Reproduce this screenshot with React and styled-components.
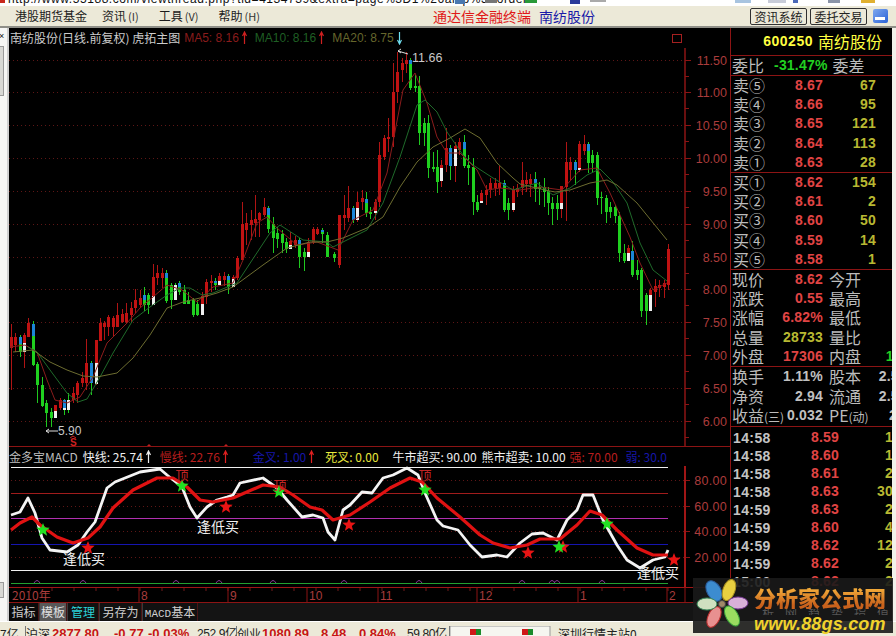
import React from "react";
import styled, { createGlobalStyle } from "styled-components";

const Global = createGlobalStyle`
  html, body { margin: 0; padding: 0; background: #ece9d8; }
  body { font-family: "Noto Sans CJK SC", "Liberation Sans", sans-serif; }
  * { box-sizing: border-box; }
`;

const CJK = `"Noto Sans CJK SC", "Liberation Sans", sans-serif`;
const LATIN = `"Liberation Sans", "Noto Sans CJK SC", sans-serif`;
const FRAME = "#8c1414";

const Page = styled.div`
  position: relative;
  width: 896px;
  height: 636px;
  overflow: hidden;
  background: #ece9d8;
  display: flex;
  flex-direction: column;
`;

/* ---------- browser strip ---------- */
const TopStrip = styled.div`
  position: relative;
  height: 6px;
  background: #ffffff;
  overflow: hidden;
  flex: none;
`;
const Url = styled.div`
  margin: -8px 0 0 8px;
  font: 12px/14px ${LATIN};
  letter-spacing: 0.55px;
  color: #111;
  white-space: nowrap;
`;
const StripIcons = styled.svg`
  position: absolute;
  inset: 0;
  width: 896px;
  height: 6px;
`;

/* ---------- menu ---------- */
const MenuBar = styled.div`
  height: 22px;
  flex: none;
  display: flex;
  align-items: center;
  background: #ece9d8;
  border-bottom: 2px solid #8f8f88;
  padding-left: 15px;
  font: 12px/16px ${CJK};
  color: #1c1c1c;
`;
const MenuItem = styled.span`
  margin-left: ${(p) => p.$ml || 0}px;
  white-space: nowrap;
`;
const MenuKey = styled.span`
  font-size: 11px;
  margin-left: 2px;
  color: #333;
`;
const BrandTitle = styled.span`
  margin-left: ${(p) => p.$ml || 0}px;
  font-size: 14px;
  color: ${(p) => p.$color};
  white-space: nowrap;
`;
const SysButton = styled.button`
  width: 57px;
  height: 17px;
  margin-left: ${(p) => p.$ml || 0}px;
  padding: 0;
  background: #ece9d8;
  border: 1px solid #303030;
  border-radius: 2px;
  font: 12px/15px ${CJK};
  color: #222;
`;
const MinimizeIcon = styled.div`
  width: 15px;
  height: 14px;
  margin-left: 6px;
  border-radius: 2px;
  background: linear-gradient(135deg, #7fa8ee, #2a62d8);
  display: flex;
  align-items: flex-end;
  justify-content: center;
  padding-bottom: 3px;
  &::after {
    content: "";
    width: 10px;
    height: 3px;
    background: #fff;
  }
`;

/* ---------- body ---------- */
const Body = styled.div`
  display: flex;
  height: 593px;
  flex: none;
`;
const Rail = styled.div`
  width: 9px;
  flex: none;
  background: #f6f6f4;
  border-right: 2px solid #cfcfcf;
  display: flex;
  flex-direction: column;
  align-items: flex-start;
  font: 9px/10px ${LATIN};
  color: #111;
`;
const RailMark = styled.span`
  height: 14px;
  padding-top: 3px;
  margin-left: -1px;
`;
const RailTab = styled.div`
  width: 4px;
  height: ${(p) => p.$h}px;
  margin-top: ${(p) => p.$mt || 0}px;
  background: #d8d8d4;
  border: 1px solid #9a9a9a;
  border-left: 0;
`;
const Center = styled.div`
  width: 721px;
  flex: none;
  background: #000;
  display: flex;
  flex-direction: column;
`;
const ChartHead = styled.div`
  height: ${(p) => p.$h}px;
  flex: none;
  display: flex;
  align-items: center;
  font: 12px/16px ${LATIN};
  white-space: nowrap;
  overflow: hidden;
  border-top: ${(p) => (p.$rule ? `1px solid ${FRAME}` : "0")};
`;
const HeadText = styled.span`
  color: ${(p) => p.$color};
  margin-left: ${(p) => p.$ml || 0}px;
  font-family: ${(p) => (p.$latin ? LATIN : CJK)};
  flex: none;
  display: inline-flex;
  align-items: center;
`;
const RestoreBox = styled.span`
  width: 10px;
  height: 9px;
  border: 1px solid #a52020;
  margin-left: auto;
  margin-right: 48px;
  flex: none;
`;
const PlotSvg = styled.svg`
  display: block;
  flex: none;
  font-family: ${LATIN};
`;
const Tabs = styled.div`
  flex: 1;
  display: flex;
  align-items: stretch;
  background: #141414;
  font: 12px/17px ${CJK};
`;
const Tab = styled.div`
  width: ${(p) => p.$w}px;
  flex: none;
  text-align: center;
  border-right: 1px solid #4a1414;
  border-left: ${(p) => (p.$first ? "0" : "1px solid #3a3a3a")};
  background: ${(p) => (p.$selected ? "#585858" : p.$first ? "#0a0a0a" : "#111")};
  color: ${(p) => (p.$accent ? "#2bd3d8" : p.$selected ? "#e0e0e0" : "#cfcfcf")};
  white-space: nowrap;
`;
const TabMono = styled.span`
  font-family: "Liberation Mono", monospace;
  font-size: 11px;
`;

/* ---------- right panel ---------- */
const Quote = styled.div`
  width: 162px;
  flex: none;
  background: #000;
  border-left: 1px solid ${FRAME};
  display: flex;
  flex-direction: column;
  overflow: hidden;
  color: #bcbcbc;
  font: 16px/19px ${CJK};
`;
const EdgeGap = styled.div`
  flex: 1;
  background: #f2f1ea;
`;
const Section = styled.div`
  height: ${(p) => p.$h}px;
  flex: none;
  display: grid;
  grid-auto-rows: 1fr;
  align-items: center;
  border-bottom: 1px solid ${FRAME};
`;
const StockHead = styled.div`
  padding-right: 10px;
  display: flex;
  justify-content: flex-end;
  align-items: center;
  gap: 5px;
  color: #ffff40;
`;
const StockCode = styled.span`
  font: bold 14px/19px ${LATIN};
  letter-spacing: 0.5px;
`;
const Num = styled.span`
  font: bold 14px/19px ${LATIN};
  letter-spacing: 0.2px;
  color: ${(p) => p.$color};
  white-space: nowrap;
`;
const RatioNum = styled(Num)`
  margin: 0 5px 0 10px;
`;
const BookRow = styled.div`
  width: 145px;
  padding-left: 2px;
  display: grid;
  grid-template-columns: 32px 58px 53px;
  white-space: nowrap;
  & > span:nth-child(n + 2) {
    text-align: right;
  }
`;
const RatioRow = styled.div`
  padding-left: 1px;
  display: flex;
  align-items: center;
  white-space: nowrap;
`;
const QuoteRow = styled.div`
  padding-left: 1px;
  display: flex;
  white-space: nowrap;
`;
const Cell = styled.div`
  width: ${(p) => p.$w}px;
  flex: none;
  margin-left: ${(p) => p.$ml || 0}px;
  display: flex;
  justify-content: space-between;
`;
const SmallParen = styled.span`
  font-size: 12px;
`;
const Ticks = styled.div`
  flex: 1;
  padding-top: 1px;
  display: grid;
  grid-auto-rows: 18px;
  align-content: start;
`;
const TickRow = styled.div`
  width: 166px;
  padding-left: 2px;
  display: grid;
  grid-template-columns: 36px 70px 54px;
  align-items: center;
  white-space: nowrap;
  & > span:nth-child(n + 2) {
    text-align: right;
  }
`;
const TickTime = styled.span`
  font: bold 14px/18px ${LATIN};
  letter-spacing: 0.4px;
  color: #c4c4c4;
`;

/* ---------- status ---------- */
const Status = styled.div`
  flex: 1;
  display: flex;
  padding-top: 4px;
  border-top: 1px solid #fff;
  background: #ece9d8;
  font: 12px/16px ${CJK};
  color: #222;
  white-space: nowrap;
  overflow: hidden;
`;
const StatusCell = styled.span`
  width: ${(p) => p.$w}px;
  flex: none;
  color: ${(p) => p.$color || "#222"};
  font-weight: ${(p) => (p.$bold ? 700 : 400)};
  font-family: ${(p) => (p.$bold || p.$tight ? LATIN : CJK)};
  font-size: ${(p) => (p.$bold ? 13 : 12)}px;
  letter-spacing: ${(p) => (p.$tight ? "-0.4px" : "0")};
  border-right: ${(p) => (p.$rule ? "1px solid #777" : "0")};
`;
const MiniBars = styled.svg`
  width: 108px;
  height: 14px;
  flex: none;
`;

/* ---------- watermark ---------- */
const Watermark = styled.div`
  position: absolute;
  left: 693px;
  top: 578px;
  width: 200px;
  height: 55px;
  padding-left: 61px;
  background: rgba(26, 26, 26, 0.9);
  display: flex;
  flex-direction: column;
`;
const Flower = styled.svg`
  position: absolute;
  left: 2px;
  top: 1px;
  width: 54px;
  height: 50px;
`;
const MarkTitle = styled.div`
  font: 900 22px/30px ${CJK};
  color: #e0902a;
  white-space: nowrap;
  background: linear-gradient(180deg, #f7b23c 20%, #c8611c 85%);
  -webkit-background-clip: text;
  background-clip: text;
  -webkit-text-fill-color: transparent;
  margin-top: 4px;
  height: 27px;
`;
const MarkFaint = styled.div`
  font: 12px/8px ${CJK};
  height: 6px;
  letter-spacing: 11px;
  padding-left: 8px;
  color: #565656;
  white-space: nowrap;
  overflow: hidden;
`;
const MarkUrl = styled.div`
  font: italic 700 18px/18px ${LATIN};
  color: #f0d22c;
  letter-spacing: 0.2px;
  white-space: nowrap;
`;

/* ---------- data ---------- */
const candles = [
  [11,324,390,337,348,"r"],[15,333,352,337,345,"r"],[20,335,357,337,352,"bg",344],[24,333,368,335,352,"rw",343],
  [28,318,337,323,337,"r"],[33,321,366,324,365,"bg",336],[37,362,403,364,385,"g"],[42,377,407,385,406,"g"],
  [46,400,427,403,413,"g"],[51,408,427,412,418,"g"],[55,405,418,405,418,"rw",411],[60,398,410,400,408,"r"],
  [64,399,415,400,410,"bw",408],[68,393,413,400,410,"w"],[73,387,403,393,400,"r"],[77,381,403,383,395,"r"],
  [82,372,387,378,383,"r"],[86,339,390,363,383,"r"],[91,361,395,363,383,"b"],[96,340,385,340,384,"rw",363],
  [100,318,341,323,341,"r"],[104,321,340,323,327,"r"],[108,315,336,317,327,"r"],[113,316,337,318,327,"r"],
  [117,303,327,315,327,"r"],[122,309,323,314,322,"r"],[126,303,323,313,322,"r"],[131,302,323,308,315,"r"],
  [135,289,313,300,308,"r"],[140,290,308,298,305,"r"],[144,287,311,295,305,"bg",300],[148,293,314,295,305,"g"],
  [153,264,305,277,305,"rw",296],[157,265,285,273,278,"r"],[162,268,288,273,278,"r"],[166,270,303,273,301,"bg",278],
  [171,283,309,285,300,"g"],[175,283,300,285,300,"w"],[179,281,295,283,292,"bg",287],[184,285,304,290,304,"g"],
  [188,292,304,300,304,"g"],[193,298,317,300,315,"g"],[197,300,316,304,315,"g"],[202,292,315,296,315,"rw",304],
  [206,279,304,282,297,"r"],[211,275,292,281,283,"r"],[215,278,290,281,285,"bg",283],[219,273,285,276,285,"rw",281],
  [224,272,286,276,280,"r"],[228,274,294,276,287,"bg",280],[233,275,287,277,287,"rw",279],[237,256,280,258,278,"r"],
  [242,202,260,224,260,"r"],[246,213,245,223,230,"r"],[251,210,240,220,225,"r"],[255,195,237,219,223,"r"],
  [259,212,237,213,220,"r"],[264,198,217,207,215,"r"],[268,206,233,208,229,"bg",215],[273,217,253,224,238,"g"],
  [277,227,248,233,239,"g"],[282,230,253,234,243,"g"],[286,238,253,242,249,"g"],[290,232,249,241,249,"rw",245],
  [295,236,248,240,245,"r"],[299,238,268,240,257,"bg",244],[304,248,271,252,257,"g"],[308,238,257,242,257,"rw",252],
  [313,227,244,229,242,"r"],[317,227,235,229,234,"r"],[322,228,243,230,234,"bg",232],[327,232,257,235,257,"g"],
  [334,252,262,254,258,"g"],[339,215,268,215,265,"r"],[344,195,230,215,218,"r"],[348,186,222,208,218,"r"],
  [353,206,223,208,220,"b"],[357,192,222,202,220,"rw",208],[362,190,210,198,202,"r"],[366,192,217,199,213,"bg",203],
  [370,207,219,212,214,"g"],[375,199,220,202,213,"rw",211],[379,142,207,155,202,"r"],[384,135,160,138,157,"r"],
  [388,118,152,137,139,"r"],[393,63,147,92,137,"r"],[397,52,103,72,92,"r"],[402,58,82,63,70,"r"],
  [406,52,73,60,64,"r"],[410,58,90,60,88,"bg",64],[415,75,92,86,88,"g"],[419,76,145,86,133,"g"],
  [424,118,146,123,133,"g"],[428,115,178,123,168,"g"],[433,152,172,167,169,"g"],[437,150,193,167,182,"g"],
  [441,160,187,165,181,"rw",168],[446,128,172,148,165,"r"],[450,145,180,148,166,"b"],[455,142,182,146,166,"rw",149],
  [459,138,155,142,150,"r"],[464,135,168,142,166,"bg",149],[468,155,185,165,168,"g"],[473,158,215,167,202,"g"],
  [477,195,212,202,210,"g"],[481,190,203,193,203,"rw",201],[486,185,205,190,195,"r"],[490,178,198,183,190,"r"],
  [495,178,196,183,188,"r"],[499,166,195,183,188,"r"],[504,180,212,183,210,"bg",186],[508,198,220,203,210,"g"],
  [513,186,212,190,210,"rw",203],[517,184,197,188,192,"r"],[522,162,195,180,188,"r"],[526,172,192,180,184,"r"],
  [530,174,197,179,184,"r"],[535,172,202,179,189,"bg",183],[539,182,205,187,189,"g"],[544,178,207,187,192,"g"],
  [548,187,215,191,203,"g"],[552,197,225,203,209,"g"],[557,195,220,203,209,"g"],[561,186,218,186,209,"rw",203],
  [566,142,221,162,187,"r"],[570,157,180,162,170,"r"],[575,160,185,162,170,"b"],[579,141,172,144,170,"rw",168],
  [584,135,155,144,151,"r"],[588,142,173,144,163,"bg",151],[592,150,172,155,163,"g"],[597,152,205,155,198,"g"],
  [601,192,214,197,198,"g"],[606,195,223,198,212,"g"],[610,202,218,207,212,"g"],[615,205,223,207,216,"g"],
  [619,212,262,216,253,"g"],[624,244,263,253,261,"g"],[628,245,261,248,261,"rw",253],[632,241,277,251,275,"bg",260],
  [637,260,280,270,275,"g"],[641,268,317,270,311,"g"],[646,293,325,295,311,"g"],[650,288,311,290,311,"rw",295],
  [655,279,307,286,292,"r"],[659,280,297,285,288,"r"],[664,280,298,283,287,"r"],[668,244,290,249,285,"r"],
];

const ma5 = [[10,347],[25,345],[37,352],[47,380],[55,400],[67,403],[80,397],[93,377],[107,343],[127,323],[140,308],[153,297],[167,285],[182,290],[197,302],[213,287],[233,283],[243,260],[257,223],[267,217],[277,228],[297,245],[317,242],[338,250],[353,220],[373,210],[387,173],[403,90],[415,73],[427,103],[437,137],[447,153],[460,153],[477,170],[487,190],[500,188],[520,190],[540,187],[562,190],[580,170],[597,168],[610,193],[630,237],[640,263],[653,290],[667,283]];
const ma10 = [[28,347],[37,352],[50,370],[67,393],[78,402],[87,399],[100,377],[113,353],[133,320],[150,307],[167,295],[180,288],[190,288],[202,295],[213,293],[237,283],[270,233],[280,225],[303,240],[327,242],[333,247],[367,230],[383,203],[400,157],[417,105],[425,100],[437,112],[447,132],[463,155],[473,165],[493,178],[513,190],[537,183],[553,195],[570,188],[587,175],[600,169],[613,182],[627,203],[640,243],[653,270],[667,281]];
const ma20 = [[13,352],[33,350],[50,362],[67,370],[83,376],[97,377],[117,373],[133,358],[150,335],[167,308],[183,302],[200,298],[217,293],[233,287],[263,265],[287,248],[310,242],[327,242],[343,238],[367,228],[383,217],[400,187],[417,162],[433,147],[450,138],[465,129],[480,138],[497,163],[513,178],[520,184],[545,190],[555,192],[570,190],[590,183],[607,180],[617,185],[637,203],[667,240]];

const fast = [[11,515],[20,512],[28,498],[35,513],[42,538],[50,550],[67,552],[78,545],[87,532],[95,522],[107,488],[115,482],[140,472],[160,469],[167,475],[182,487],[190,507],[197,518],[207,507],[217,500],[227,497],[233,495],[240,483],[263,478],[277,488],[287,500],[302,517],[313,515],[323,518],[328,532],[335,540],[343,510],[350,505],[362,492],[372,493],[383,478],[393,475],[407,468],[418,475],[425,493],[437,520],[443,526],[458,530],[470,545],[482,557],[497,555],[507,557],[520,543],[532,534],[543,533],[557,540],[567,520],[577,510],[583,495],[593,495],[603,520],[617,545],[627,560],[640,568],[653,560],[665,557],[668,550]];
const slow = [[11,530],[20,523],[32,517],[40,525],[57,537],[73,543],[88,538],[100,527],[113,508],[133,490],[157,478],[173,478],[187,487],[200,500],[213,502],[233,498],[263,485],[280,487],[293,495],[310,507],[322,510],[333,520],[350,515],[370,502],[390,488],[410,478],[422,482],[437,498],[460,517],[480,535],[493,543],[510,548],[527,545],[540,539],[560,539],[577,525],[590,511],[602,515],[617,530],[637,548],[653,555],[668,555]];

const greenStars = [[43,530],[182,486],[279,492],[425,490],[559,547],[607,524]];
const redStars = [[88,548],[226,507],[349,525],[528,553],[563,547],[674,560]];
const bumps = [37,83,176,219,273,344,419,522,552,557,602];
const priceLabels = [["11.50",60.5],["11.00",92.5],["10.50",125.5],["10.00",158.5],["9.50",191.5],["9.00",224.5],["8.50",257.5],["8.00",289.5],["7.50",322.5],["7.00",355.5],["6.50",388.5],["6.00",421.5]];
const dateMarks = [[139,"8"],[228,"9"],[307,"10"],[378,"11"],[477,"12"],[578,"1"],[667,"2"]];

const pts = (a) => a.map((p) => p.join(",")).join(" ");
const BAR = { r: "#c01212", g: "#1fd01f", b: "#1c86d8", w: "#f0f0f0" };

function Candle({ c }) {
  const [x, hi, lo, top, bot, t, split] = c;
  const wick = t === "r" || t === "rw" ? "#b01414" : "#1fc81f";
  const parts =
    t.length === 1
      ? [[top, bot, BAR[t]]]
      : [
          [top, split, BAR[t[0]]],
          [split, bot, BAR[t[1]]],
        ];
  return (
    <g shapeRendering="crispEdges">
      <line x1={x + 0.5} x2={x + 0.5} y1={hi} y2={lo} stroke={wick} />
      {parts.map(([a, b, col], i) => (
        <rect key={i} x={x - 1} y={a} width={3} height={Math.max(b - a, 1)} fill={col} />
      ))}
    </g>
  );
}

function Star({ x, y, color }) {
  const p = [];
  for (let i = 0; i < 10; i++) {
    const r = i % 2 ? 3 : 7;
    const a = (-90 + i * 36) * (Math.PI / 180);
    p.push([x + r * Math.cos(a), y + r * Math.sin(a)]);
  }
  return <polygon points={pts(p)} fill={color} />;
}

const ArrowSvg = styled.svg`
  margin-left: 3px;
  flex: none;
`;
const Arrow = ({ color, down }) => (
  <ArrowSvg width="5" height="14" viewBox="0 0 5 14">
    <path d={down ? "M2.5 1V13M0.5 9L2.5 13L4.5 9" : "M2.5 13V1M0.5 5L2.5 1L4.5 5"} stroke={color} fill="none" strokeWidth="1.2" />
  </ArrowSvg>
);

function PriceChart() {
  return (
    <PlotSvg width="721" height="398" viewBox="9 48 721 398">
      {priceLabels.map(([l, y]) => (
        <g key={l}>
          <line x1="9" x2="685" y1={y} y2={y} stroke="#5e1616" strokeDasharray="1 3" />
          <line x1="685" x2="691" y1={y} y2={y} stroke="#8c1414" />
          <line x1="685" x2="689" y1={y + 16} y2={y + 16} stroke="#8c1414" />
          <text x="727" y={y + 4.5} textAnchor="end" fontSize="12.5" fill="#ab3c3c">{l}</text>
        </g>
      ))}
      <line x1="685" x2="685" y1="48" y2="446" stroke="#8c1414" strokeWidth="1.5" />
      {candles.map((c) => <Candle key={c[0]} c={c} />)}
      <polyline points={pts(ma5)} fill="none" stroke="#8a1c1c" strokeWidth="1" />
      <polyline points={pts(ma10)} fill="none" stroke="#1f6a2a" strokeWidth="1" />
      <polyline points={pts(ma20)} fill="none" stroke="#6d6d30" strokeWidth="1" />
      <path d="M408 54L398 51M398 51l3 -2M398 51l3 2" stroke="#ddd" fill="none" />
      <text x="412" y="62" fontSize="12.5" fill="#c8c8c8">11.66</text>
      <path d="M46 431H58M46 431l3 -2M46 431l3 2" stroke="#ddd" fill="none" />
      <text x="58" y="435" fontSize="12" fill="#c8c8c8">5.90</text>
      <text x="70" y="445.5" fontSize="10" fontWeight="700" fill="#d02020">S</text>
      <path d="M70 438l3 -2l3 2" stroke="#d02020" fill="none" />
      <path d="M147 446l2 -2l2 2zM224 446l2 -2l2 2z" fill="#c02020" />
    </PlotSvg>
  );
}

function IndicatorChart() {
  const axis = [["80.00", 480.5], ["60.00", 506.5], ["40.00", 531.5], ["20.00", 557.5]];
  const rules = [[467.5, "#f0f0f0"], [493.5, "#a01c1c"], [518.5, "#b030b0"], [544.5, "#1515b0"], [570.5, "#f0f0f0"], [583.5, "#22a030"]];
  return (
    <PlotSvg width="721" height="121" viewBox="9 466 721 121">
      {axis.map(([l, y]) => (
        <g key={l}>
          <line x1="11" x2="685" y1={y} y2={y} stroke="#5e1616" strokeDasharray="1 3" />
          <line x1="685" x2="690" y1={y} y2={y} stroke="#8c1414" />
          <text x="727" y={y + 4.5} textAnchor="end" fontSize="12.5" letterSpacing="0.3" fill="#ab3c3c">{l}</text>
        </g>
      ))}
      {rules.map(([y, col]) => (
        <line key={y} x1="11" x2="668" y1={y} y2={y} stroke={col} strokeWidth="1" />
      ))}
      {bumps.map((x) => (
        <path key={x} d={`M${x - 3} 583Q${x} 578 ${x + 3} 583`} stroke="#8a3a9a" fill="none" />
      ))}
      <line x1="685" x2="685" y1="466" y2="587" stroke="#a01616" strokeWidth="2" />
      <polyline points={pts(fast)} fill="none" stroke="#f4f4f4" strokeWidth="2.8" strokeLinejoin="round" />
      <polyline points={pts(slow)} fill="none" stroke="#e01212" strokeWidth="3.2" strokeLinejoin="round" />
      {redStars.map(([x, y]) => <Star key={x} x={x} y={y} color="#e81414" />)}
      {greenStars.map(([x, y]) => <Star key={x} x={x} y={y} color="#22e022" />)}
      <text x="182" y="480" fontSize="13" textAnchor="middle" fontFamily={CJK} fill="#c02424">顶</text>
      <text x="280" y="490" fontSize="13" textAnchor="middle" fontFamily={CJK} fill="#c02424">顶</text>
      <text x="425" y="480" fontSize="13" textAnchor="middle" fontFamily={CJK} fill="#c02424">顶</text>
      <text x="63" y="564" fontSize="14" fontFamily={CJK} fill="#f0f0f0">逢低买</text>
      <text x="197" y="532" fontSize="14" fontFamily={CJK} fill="#f0f0f0">逢低买</text>
      <text x="637" y="578" fontSize="14" fontFamily={CJK} fill="#f0f0f0">逢低买</text>
    </PlotSvg>
  );
}

function DateAxis() {
  const minor = [];
  for (let x = 30; x < 670; x += 22) minor.push(x);
  return (
    <PlotSvg width="721" height="16" viewBox="9 587 721 16">
      <line x1="9" x2="730" y1="587.5" y2="587.5" stroke="#a01616" />
      <line x1="9" x2="730" y1="602.5" y2="602.5" stroke="#8c1414" />
      <line x1="685" x2="685" y1="587" y2="603" stroke="#8c1414" />
      {minor.map((x) => <line key={x} x1={x} x2={x} y1="588" y2="591" stroke="#6e1a1a" />)}
      <text x="12" y="600" fontSize="12" fontFamily={CJK} fill="#a83c3c">2010年</text>
      {dateMarks.map(([x, l]) => (
        <g key={l}>
          <line x1={x} x2={x} y1="588" y2="602" stroke="#8c1414" />
          <text x={x + 2} y="600" fontSize="12" fill="#a83c3c">{l}</text>
        </g>
      ))}
    </PlotSvg>
  );
}

const sells = [["卖⑤","8.67","67"],["卖④","8.66","95"],["卖③","8.65","121"],["卖②","8.64","113"],["卖①","8.63","28"]];
const buys = [["买①","8.62","154"],["买②","8.61","2"],["买③","8.60","50"],["买④","8.59","14"],["买⑤","8.58","1"]];
const RED = "#e04444";
const YEL = "#b8b832";
const GRY = "#c0c0c0";
const quotes = [
  ["现价","8.62",RED,"今开","8.07",RED],
  ["涨跌","0.55",RED,"最高","8.70",RED],
  ["涨幅","6.82%",RED,"最低","7.98",RED],
  ["总量","28733",YEL,"量比","1.36",RED],
  ["外盘","17306",RED,"内盘","11427","#22d022"],
];
const ticks = [["14:58","8.59","1"],["14:58","8.60","1"],["14:58","8.61","2"],["14:58","8.63","30"],["14:59","8.63","2"],["14:59","8.60","4"],["14:59","8.62","12"],["14:59","8.62","2"],["15:00","8.62","2"]];

export default function App() {
  return (
    <Page>
      <Global />
      <TopStrip>
        <Url>http://www.55188.com/viewthread.php?tid=4134739&amp;extra=page%3D1%26amp%3Border</Url>
        <StripIcons viewBox="0 0 896 6">
          <rect x="0" y="0" width="5" height="3" fill="#c8281c" />
          <rect x="455" y="0" width="10" height="4" fill="#4a78b0" />
          <rect x="485" y="0" width="12" height="3" fill="#777" />
          <rect x="525" y="0" width="12" height="3" fill="#2a9a3a" />
          <rect x="570" y="0" width="10" height="4" fill="#2a3a9a" />
          <rect x="590" y="0" width="16" height="2" fill="#aaa" />
          <rect x="735" y="0" width="16" height="3" fill="#a8c4e0" />
          <rect x="768" y="0" width="18" height="3" fill="#c8ccd8" />
          <rect x="793" y="0" width="5" height="3" fill="#4a68b8" />
          <rect x="828" y="0" width="12" height="3" fill="#8a94a8" />
          <rect x="861" y="0" width="14" height="3" fill="#e0b030" />
        </StripIcons>
      </TopStrip>

      <MenuBar>
        <MenuItem>港股期货基金</MenuItem>
        <MenuItem $ml={15}>资讯<MenuKey>(I)</MenuKey></MenuItem>
        <MenuItem $ml={20}>工具<MenuKey>(V)</MenuKey></MenuItem>
        <MenuItem $ml={20}>帮助<MenuKey>(H)</MenuKey></MenuItem>
        <BrandTitle $ml={173} $color="#e01818">通达信金融终端</BrandTitle>
        <BrandTitle $ml={8} $color="#1a1aa8">南纺股份</BrandTitle>
        <SysButton $ml={155}>资讯系统</SysButton>
        <SysButton $ml={3}>委托交易</SysButton>
        <MinimizeIcon />
      </MenuBar>

      <Body>
        <Rail>
          <RailMark>×</RailMark>
          <RailTab $h={50} $mt={4} />
          <RailTab $h={16} $mt={486} />
        </Rail>
        <Center>
          <ChartHead $h={20}>
            <HeadText $color="#cccccc" $ml={1}>南纺股份(日线.前复权) 虎拓主图</HeadText>
            <HeadText $latin $color="#8a1c1c" $ml={4}>MA5: 8.16<Arrow color="#d02020" /></HeadText>
            <HeadText $latin $color="#1f5f24" $ml={8}>MA10: 8.16<Arrow color="#d02020" /></HeadText>
            <HeadText $latin $color="#66662c" $ml={8}>MA20: 8.75<Arrow color="#70e0f0" down /></HeadText>
            <RestoreBox />
          </ChartHead>
          <PriceChart />
          <ChartHead $h={20} $rule>
            <HeadText $color="#bdbdbd">金多宝MACD</HeadText>
            <HeadText $color="#f0f0f0" $ml={5}>快线: 25.74<Arrow color="#eee" /></HeadText>
            <HeadText $color="#b81e1e" $ml={9}>慢线: 22.76<Arrow color="#e02020" /></HeadText>
            <HeadText $color="#1616a8" $ml={25}>金叉: 1.00<Arrow color="#e02020" /></HeadText>
            <HeadText $color="#e8e83c" $ml={11}>死叉: 0.00</HeadText>
            <HeadText $color="#f0f0f0" $ml={14}>牛市超买: 90.00</HeadText>
            <HeadText $color="#f0f0f0" $ml={5}>熊市超卖: 10.00</HeadText>
            <HeadText $color="#b81e1e" $ml={4}>强: 70.00</HeadText>
            <HeadText $color="#1616a8" $ml={8}>弱: 30.0</HeadText>
          </ChartHead>
          <IndicatorChart />
          <DateAxis />
          <Tabs>
            <Tab $w={30} $first>指标</Tab>
            <Tab $w={28} $selected>模板</Tab>
            <Tab $w={32} $accent>管理</Tab>
            <Tab $w={43}>另存为</Tab>
            <Tab $w={56}><TabMono>MACD</TabMono>基本</Tab>
          </Tabs>
        </Center>
        <Quote>
          <Section $h={28}>
            <StockHead><StockCode>600250</StockCode>南纺股份</StockHead>
          </Section>
          <Section $h={20}>
            <RatioRow>委比<RatioNum $color="#22d022">-31.47%</RatioNum>委差</RatioRow>
          </Section>
          <Section $h={97}>
            {sells.map(([a, p, v]) => (
              <BookRow key={a}><span>{a}</span><Num $color={RED}>{p}</Num><Num $color={YEL}>{v}</Num></BookRow>
            ))}
          </Section>
          <Section $h={97}>
            {buys.map(([a, p, v]) => (
              <BookRow key={a}><span>{a}</span><Num $color={RED}>{p}</Num><Num $color={YEL}>{v}</Num></BookRow>
            ))}
          </Section>
          <Section $h={97}>
            {quotes.map(([a, v, c, b, w, d]) => (
              <QuoteRow key={a}>
                <Cell $w={91}><span>{a}</span><Num $color={c}>{v}</Num></Cell>
                <Cell $w={96} $ml={6}><span>{b}</span><Num $color={d}>{w}</Num></Cell>
              </QuoteRow>
            ))}
          </Section>
          <Section $h={60}>
            <QuoteRow>
              <Cell $w={91}><span>换手</span><Num $color={GRY}>1.11%</Num></Cell>
              <Cell $w={92} $ml={6}><span>股本</span><Num $color={GRY}>2.58亿</Num></Cell>
            </QuoteRow>
            <QuoteRow>
              <Cell $w={91}><span>净资</span><Num $color={GRY}>2.94</Num></Cell>
              <Cell $w={92} $ml={6}><span>流通</span><Num $color={GRY}>2.58亿</Num></Cell>
            </QuoteRow>
            <QuoteRow>
              <Cell $w={91}><span>收益<SmallParen>(三)</SmallParen></span><Num $color={GRY}>0.032</Num></Cell>
              <Cell $w={96} $ml={6}><span>PE<SmallParen>(动)</SmallParen></span><Num $color={GRY}>202.0</Num></Cell>
            </QuoteRow>
          </Section>
          <Ticks>
            {ticks.map(([t, p, v], i) => (
              <TickRow key={i}><TickTime>{t}</TickTime><Num $color={RED}>{p}</Num><Num $color={YEL}>{v}</Num></TickRow>
            ))}
          </Ticks>
        </Quote>
        <EdgeGap />
      </Body>

      <Status>
        <StatusCell $w={26} $rule>7亿</StatusCell>
        <StatusCell $w={26}>沪深</StatusCell>
        <StatusCell $w={62} $bold $color="#c81414">2877.80</StatusCell>
        <StatusCell $w={34} $bold $color="#c81414">-0.77</StatusCell>
        <StatusCell $w={49} $bold $color="#c81414">-0.03%</StatusCell>
        <StatusCell $w={40} $rule $tight>252.9亿</StatusCell>
        <StatusCell $w={25}>创业</StatusCell>
        <StatusCell $w={59} $bold $color="#c81414">1080.89</StatusCell>
        <StatusCell $w={38} $bold $color="#c81414">8.48</StatusCell>
        <StatusCell $w={48} $bold $color="#c81414">0.84%</StatusCell>
        <StatusCell $w={43} $rule $tight>59.80亿</StatusCell>
        <MiniBars viewBox="0 0 108 14">
          <rect x="0" y="0" width="100" height="14" fill="#f6f6f0" stroke="#999" />
          <rect x="20" y="3" width="6" height="6" fill="#d01818" />
          <rect x="26" y="3" width="5" height="6" fill="#1a8a2a" />
          <rect x="72" y="3" width="6" height="6" fill="#d01818" />
          <rect x="78" y="3" width="5" height="6" fill="#1a8a2a" />
        </MiniBars>
        <StatusCell $w={90}>深圳行情主站0</StatusCell>
      </Status>

      <Watermark>
        <Flower viewBox="0 0 54 50">
          <g transform="translate(27 25)">
            <ellipse cx="-8" cy="-13" rx="7" ry="11" transform="rotate(-30 -8 -13)" fill="#3c8cd0" stroke="#2a5a98" />
            <ellipse cx="7" cy="-14" rx="6" ry="11" transform="rotate(20 7 -14)" fill="#e8d040" stroke="#a89020" />
            <ellipse cx="16" cy="-1" rx="10" ry="6" fill="#d8b0d8" stroke="#7a3a98" />
            <ellipse cx="10" cy="12" rx="6" ry="11" transform="rotate(-30 10 12)" fill="#9add60" stroke="#3aa03a" />
            <ellipse cx="-8" cy="13" rx="6" ry="11" transform="rotate(25 -8 13)" fill="#e89090" stroke="#c03030" />
            <ellipse cx="-15" cy="0" rx="10" ry="6" fill="#cfe0c0" stroke="#3a8a5a" />
            <circle r="3.5" fill="#a08868" stroke="#444" />
          </g>
        </Flower>
        <MarkTitle>分析家公式网</MarkTitle>
        <MarkFaint>析网趋势指值</MarkFaint>
        <MarkUrl>www.88gs.com</MarkUrl>
      </Watermark>
    </Page>
  );
}
